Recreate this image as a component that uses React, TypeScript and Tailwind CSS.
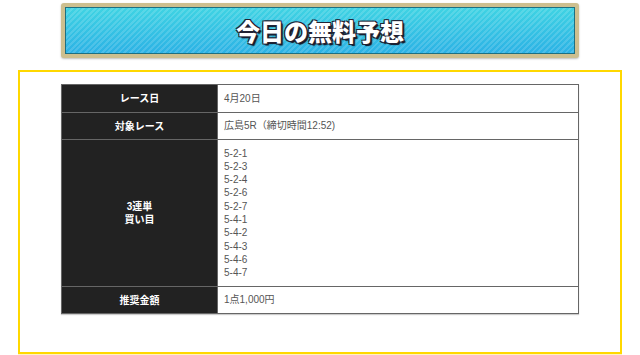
import React from 'react';

const picks = ['5-2-1', '5-2-3', '5-2-4', '5-2-6', '5-2-7', '5-4-1', '5-4-2', '5-4-3', '5-4-6', '5-4-7'];

const HeadCell: React.FC<{ children: React.ReactNode }> = ({ children }) => (
  <th className="w-[156px] bg-[#222222] border border-[#666666] text-white text-[10px] font-bold text-center align-middle leading-[13px]">
    {children}
  </th>
);

const BodyCell: React.FC<{ children: React.ReactNode }> = ({ children }) => (
  <td className="bg-white border border-[#666666] text-[#555555] text-[10px] text-left align-middle pl-[6px] leading-[13.3px]">
    {children}
  </td>
);

export default function App() {
  return (
    <div className="w-[640px] h-[355px] bg-white overflow-hidden font-['Liberation_Sans','Noto_Sans_CJK_JP',sans-serif]">
      {/* Title banner */}
      <div className="pt-[3px] flex justify-center">
        <div className="w-[518px] h-[55px] rounded-[3px] border-[4px] border-[#cdbf8f] bg-[#cdbf8f] shadow-[0_1px_2px_rgba(0,0,0,0.25)]">
          <div className="h-full border border-[#1d6f82] flex items-center justify-center bg-[repeating-linear-gradient(135deg,rgba(255,255,255,0.14)_0px,rgba(255,255,255,0.14)_2px,transparent_2px,transparent_4px),linear-gradient(to_bottom,#3fd3e3,#2cb2e5)]">
            <h1 className="font-['Noto_Sans_CJK_JP',sans-serif] font-black text-[24px] text-white tracking-[0px] leading-none [text-shadow:1px_1px_0_#223,-1px_-1px_0_#223,1px_-1px_0_#223,-1px_1px_0_#223,2px_2px_1px_#112]">
              今日の無料予想
            </h1>
          </div>
        </div>
      </div>

      {/* Prediction box */}
      <div className="mt-[12px] mx-[18px] h-[284px] border-2 border-[#ffd800] pt-[12px] shadow-[0_2px_0_#fff3bf]">
        <table className="mx-auto w-[518px] border-collapse border border-[#444444] shadow-[0_1px_1px_rgba(0,0,0,0.2)]">
          <tbody>
            <tr className="h-[28px]">
              <HeadCell>レース日</HeadCell>
              <BodyCell>4月20日</BodyCell>
            </tr>
            <tr className="h-[27px]">
              <HeadCell>対象レース</HeadCell>
              <BodyCell>広島5R（締切時間12:52)</BodyCell>
            </tr>
            <tr className="h-[147px]">
              <HeadCell>
                3連単
                <br />
                買い目
              </HeadCell>
              <BodyCell>
                <div className="py-[6px]">
                  {picks.map((p) => (
                    <div key={p}>{p}</div>
                  ))}
                </div>
              </BodyCell>
            </tr>
            <tr className="h-[27px]">
              <HeadCell>推奨金額</HeadCell>
              <BodyCell>1点1,000円</BodyCell>
            </tr>
          </tbody>
        </table>
      </div>
    </div>
  );
}
